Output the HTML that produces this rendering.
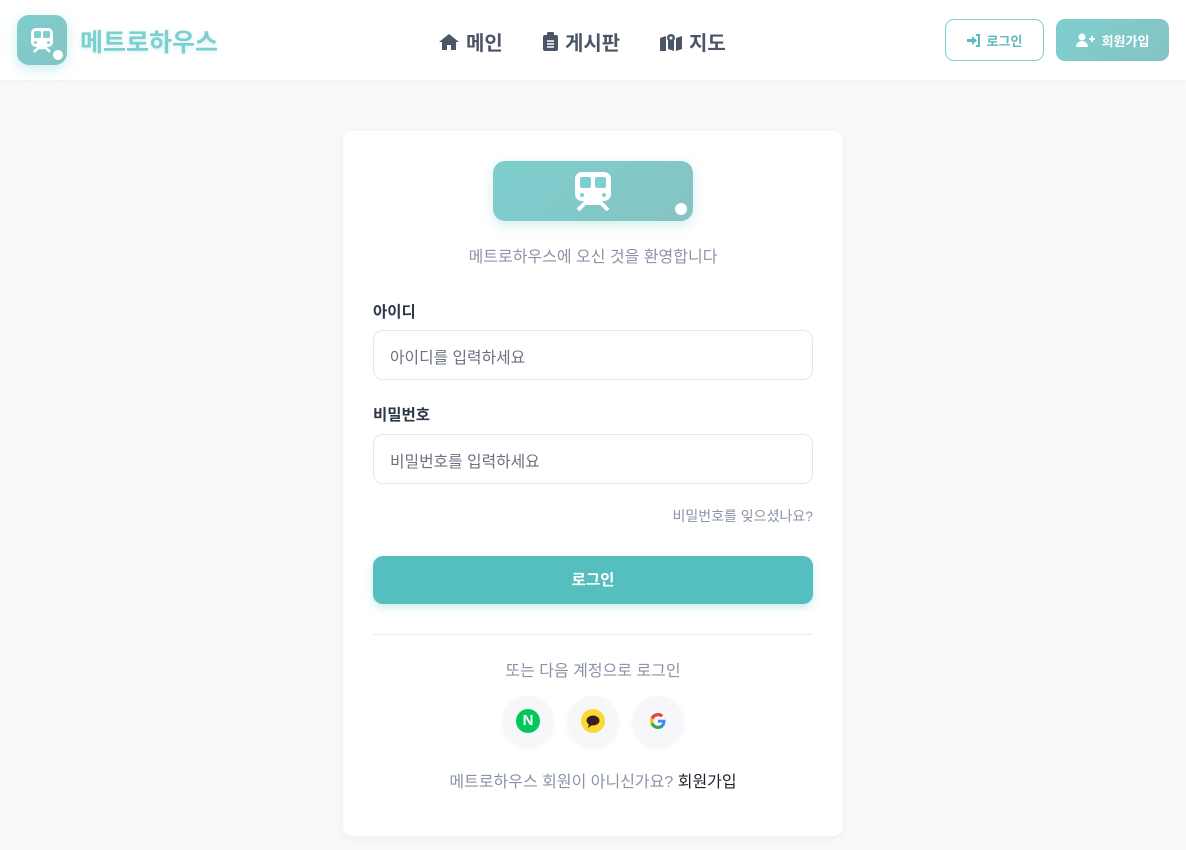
<!DOCTYPE html>
<html><head><meta charset="utf-8"><style>
*{box-sizing:border-box;margin:0;padding:0}
body{width:1186px;height:850px;background:#f9f9f9;font-family:"Liberation Sans","Noto Sans CJK KR",sans-serif;overflow:hidden;position:relative}
.hdr{position:absolute;left:0;top:0;width:1186px;height:80px;background:#fff;box-shadow:0 1px 4px rgba(0,0,0,.04)}
.logo{position:absolute;left:17px;top:15px;width:50px;height:50px;border-radius:12px;background:linear-gradient(135deg,#7ecfcf,#86c3c3);box-shadow:0 4px 12px rgba(126,207,207,.4)}
.dot{position:absolute;width:10px;height:10px;border-radius:50%;background:#fff}
.brand{position:absolute;left:80px;top:23px;font-size:25px;font-weight:bold;color:#7ecfcf;text-shadow:0 2px 4px rgba(126,207,207,.3)}
.nav{position:absolute;top:27px;font-size:20px;font-weight:bold;color:#4a5568;display:flex;align-items:center;gap:7px}
.btn{position:absolute;top:19px;height:42px;border-radius:9px;font-size:13px;font-weight:bold;display:flex;align-items:center;justify-content:center;gap:6px}
.card{position:absolute;left:343px;top:131px;width:500px;height:705px;background:#fff;border-radius:10px;box-shadow:0 2px 10px rgba(0,0,0,.05)}
.lbl{position:absolute;left:30px;font-size:15.5px;font-weight:bold;color:#2d3748}
.inp{position:absolute;left:30px;width:440px;height:50px;border:1px solid #e2e8f0;border-radius:10px;font-size:15.8px;color:#6b7280;padding:14px 16px}
.soc{position:absolute;top:565px;width:50px;height:50px;border-radius:50%;background:#f5f7fa;box-shadow:0 2px 6px rgba(0,0,0,.06);display:flex;align-items:center;justify-content:center}
</style></head><body>
<div class="hdr">
<div class="logo"><svg width="50" height="50" viewBox="0 0 50 50"><rect x="14" y="13" width="22" height="19" rx="5" fill="#fff"/><rect x="17" y="16" width="7" height="7" rx="1.5" fill="#7ecfcf"/><rect x="26" y="16" width="7" height="7" rx="1.5" fill="#7ecfcf"/><circle cx="18.5" cy="27.5" r="1.5" fill="#7ecfcf"/><circle cx="31.5" cy="27.5" r="1.5" fill="#7ecfcf"/><path d="M17 37l4-4h8l4 4" stroke="#fff" stroke-width="2.5" fill="none"/></svg><div class="dot" style="left:36px;top:35px"></div></div>
<div class="brand">메트로하우스</div>
<div class="nav" style="left:439px"><svg width="20" height="18" viewBox="0 0 20 18"><path d="M10 1L0 9h3v8h5v-5h4v5h5V9h3z" fill="#4a5568"/></svg>메인</div>
<div class="nav" style="left:543px"><svg width="15" height="19" viewBox="0 0 15 19"><rect x="0" y="3" width="15" height="16" rx="2" fill="#4a5568"/><rect x="4" y="0" width="7" height="5" rx="1.5" fill="#4a5568"/><path d="M4 9h7M4 12h7M4 15h7" stroke="#fff" stroke-width="1.5"/></svg>게시판</div>
<div class="nav" style="left:660px"><svg width="22" height="18" viewBox="0 0 22 18"><path d="M0 5l6-2v15l-6 2zM8 3l6 2v13l-6-2zM16 5l6-2v13l-6 2z" fill="#4a5568"/><circle cx="11" cy="5" r="4" fill="#4a5568"/><circle cx="11" cy="5" r="1.5" fill="#fff"/></svg>지도</div>
<div class="btn" style="left:945px;width:99px;border:1px solid #7ecfcf;color:#5bbcbc;background:#fff"><svg width="14" height="13" viewBox="0 0 14 13"><path d="M0 5h5V2l5 4.5L5 11V8H0z" fill="#5bbcbc"/><path d="M9 1h3v11H9" stroke="#5bbcbc" stroke-width="2" fill="none"/></svg>로그인</div>
<div class="btn" style="left:1056px;width:113px;background:linear-gradient(135deg,#7ecfcf,#86c3c3);color:#fff"><svg width="20" height="14" viewBox="0 0 20 14"><circle cx="6" cy="4" r="3.5" fill="#fff"/><path d="M0 14c0-4 3-6 6-6s6 2 6 6z" fill="#fff"/><path d="M16 3v6M13 6h6" stroke="#fff" stroke-width="2"/></svg>회원가입</div>
</div>
<div class="card">
<div style="position:absolute;left:150px;top:30px;width:200px;height:60px;border-radius:12px;background:linear-gradient(135deg,#7ecfcf,#86c3c3);box-shadow:0 4px 12px rgba(126,207,207,.35)"><svg style="position:absolute;left:80px;top:9px" width="40" height="42" viewBox="0 0 40 42"><rect x="2" y="2" width="36" height="29" rx="7" fill="#fff"/><rect x="7" y="7" width="11" height="11" rx="2" fill="#7ecfcf"/><rect x="22" y="7" width="11" height="11" rx="2" fill="#7ecfcf"/><circle cx="9" cy="25" r="2" fill="#7ecfcf"/><circle cx="31" cy="25" r="2" fill="#7ecfcf"/><path d="M5 40l7-7h16l7 7" stroke="#fff" stroke-width="4" fill="none"/></svg><div class="dot" style="left:182px;top:42px;width:12px;height:12px"></div></div>
<div style="position:absolute;top:112px;width:100%;text-align:center;font-size:16px;color:#8a94a6">메트로하우스에 오신 것을 환영합니다</div>
<div class="lbl" style="top:169px">아이디</div>
<div class="inp" style="top:199px">아이디를 입력하세요</div>
<div class="lbl" style="top:272px">비밀번호</div>
<div class="inp" style="top:303px">비밀번호를 입력하세요</div>
<div style="position:absolute;right:30px;top:375px;font-size:14px;color:#8a94a6">비밀번호를 잊으셨나요?</div>
<div style="position:absolute;left:30px;top:425px;width:440px;height:48px;border-radius:10px;background:#55bfbf;color:#fff;font-size:15.5px;font-weight:bold;text-align:center;line-height:50px;box-shadow:0 3px 8px rgba(85,191,191,.35)">로그인</div>
<div style="position:absolute;left:30px;top:503px;width:440px;height:1px;background:#e8ecf0"></div>
<div style="position:absolute;top:526px;width:100%;text-align:center;font-size:16px;color:#8a94a6">또는 다음 계정으로 로그인</div>
<div class="soc" style="left:160px"><div style="width:24px;height:24px;border-radius:50%;background:#03c75a;color:#fff;font-weight:bold;font-size:15px;text-align:center;line-height:24px">N</div></div>
<div class="soc" style="left:225px"><div style="width:24px;height:24px;border-radius:50%;background:#fdd835;display:flex;align-items:center;justify-content:center"><svg width="14" height="13" viewBox="0 0 14 13"><ellipse cx="7" cy="5.5" rx="6.5" ry="5" fill="#3c1e1e"/><path d="M3 9l-1 4 4-3z" fill="#3c1e1e"/></svg></div></div>
<div class="soc" style="left:290px"><svg width="16" height="16" viewBox="0 0 16 16"><path d="M15.5 8.2c0-.6 0-1-.1-1.5H8v2.9h4.3c-.2 1-.8 1.8-1.6 2.3v1.9h2.6c1.4-1.4 2.2-3.3 2.2-5.6z" fill="#4285f4"/><path d="M8 16c2.2 0 4-.7 5.3-2l-2.6-2c-.7.5-1.6.8-2.7.8-2.1 0-3.9-1.4-4.5-3.3H.8v2C2.1 14.2 4.9 16 8 16z" fill="#34a853"/><path d="M3.5 9.5c-.2-.5-.3-1-.3-1.5s.1-1 .3-1.5v-2H.8C.3 5.5 0 6.7 0 8s.3 2.5.8 3.5z" fill="#fbbc05"/><path d="M8 3.2c1.2 0 2.200.4 3 1.2l2.3-2.3C11.9.8 10.1 0 8 0 4.9 0 2.1 1.8.8 4.5l2.7 2C4.1 4.6 5.9 3.2 8 3.2z" fill="#ea4335"/></svg></div>
<div style="position:absolute;top:637px;width:100%;text-align:center;font-size:16px;color:#8a94a6">메트로하우스 회원이 아니신가요? <span style="color:#1a202c">회원가입</span></div>
</div>
</body></html>
